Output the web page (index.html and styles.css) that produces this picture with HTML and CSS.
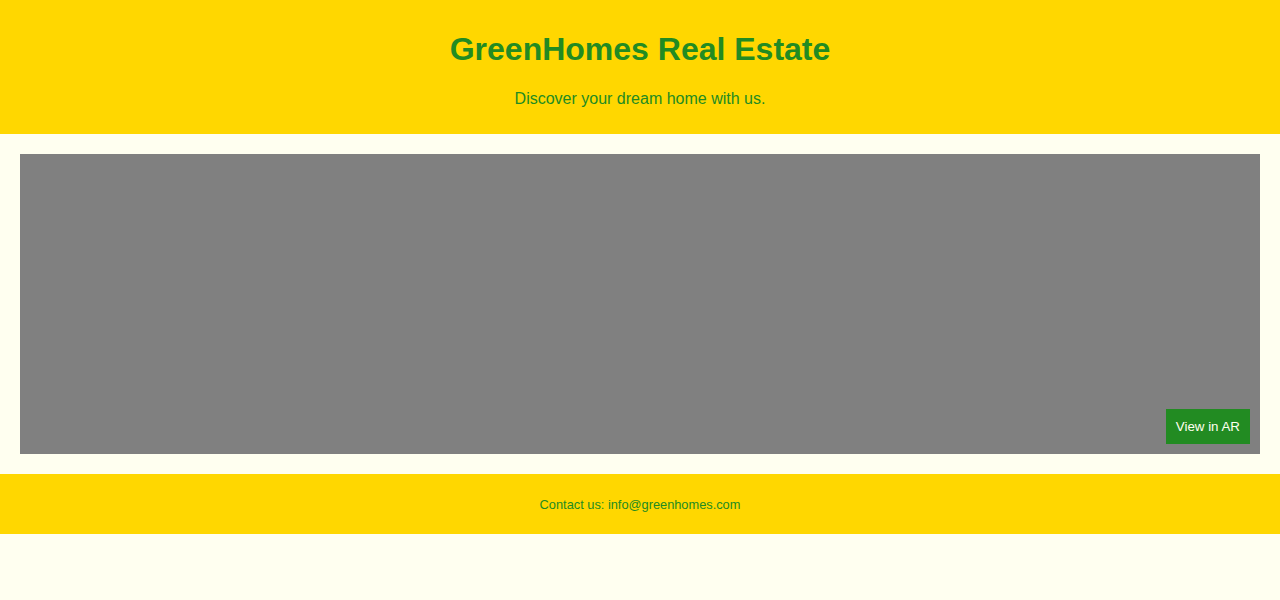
FILE: index.html
```html
<!DOCTYPE html>
<html lang="en">
<head>
<meta charset="utf-8">
<title>GreenHomes Real Estate</title>
<link rel="stylesheet" href="styles.css">
</head>
<body>
<header class="site-header">
  <h1 class="title">GreenHomes Real Estate</h1>
  <p class="tagline">Discover your dream home with us.</p>
</header>
<main class="content">
  <div class="viewer">
    <button class="ar-button">View in AR</button>
  </div>
</main>
<footer class="site-footer">
  <p class="contact">Contact us: info@greenhomes.com</p>
</footer>
</body>
</html>
```
FILE: styles.css
```css
body {
  margin: 0;
  background: #FFFFF0;
  font-family: "Liberation Sans", Arial, sans-serif;
  color: #228B22;
}
.site-header {
  background: #FFD700;
  padding: 10px;
  text-align: center;
}
.title {
  font-size: 32px;
  margin: 21.44px 0;
}
.tagline {
  font-size: 16px;
  margin: 16px 0;
}
.content {
  padding: 20px;
}
.viewer {
  position: relative;
  height: 300px;
  background: #808080;
}
.ar-button {
  position: absolute;
  right: 10px;
  bottom: 10px;
  padding: 10px;
  border: none;
  background: #228B22;
  color: #FFFFF0;
  font-family: "Liberation Sans", Arial, sans-serif;
  font-size: 13.333px;
}
.site-footer {
  background: #FFD700;
  padding: 10px;
  text-align: center;
}
.contact {
  margin: 12.8px 0;
  font-size: 12.8px;
}
```
